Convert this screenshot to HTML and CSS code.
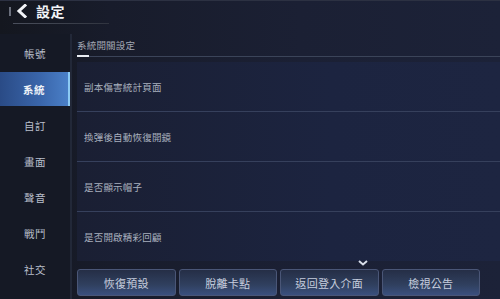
FILE: index.html
```html
<!DOCTYPE html>
<html lang="zh-Hant">
<head>
<meta charset="utf-8">
<link rel="stylesheet" href="styles.css">
</head>
<body>
<div class="app">
  <header class="topbar">
    <div class="brand">
      <span class="tick"></span>
      <svg class="back" width="12" height="14" viewBox="0 0 12 14"><path d="M9 1.5 L3 7 L9 12.5" fill="none" stroke="#f2f4f8" stroke-width="3" stroke-linecap="square"/></svg>
      <span class="title">設定</span>
    </div>
    <div class="underline"></div>
  </header>
  <div class="main">
    <nav class="sidebar">
      <div class="nav-item">帳號</div>
      <div class="nav-item active">系統</div>
      <div class="nav-item">自訂</div>
      <div class="nav-item">畫面</div>
      <div class="nav-item">聲音</div>
      <div class="nav-item">戰鬥</div>
      <div class="nav-item">社交</div>
      <div class="nav-item">其他</div>
    </nav>
    <section class="content">
      <div class="tabbar"><span class="tab">系統開關設定</span></div>
      <div class="rows">
        <div class="row">副本傷害統計頁面</div>
        <div class="row">換彈後自動恢復開鏡</div>
        <div class="row">是否顯示帽子</div>
        <div class="row">是否開啟精彩回顧</div>
      </div>
      <svg class="chev" width="10" height="6" viewBox="0 0 10 6"><path d="M1 1 L5 4.5 L9 1" fill="none" stroke="#d8deea" stroke-width="2"/></svg>
      <div class="buttons">
        <div class="btn">恢復預設</div>
        <div class="btn">脫離卡點</div>
        <div class="btn">返回登入介面</div>
        <div class="btn">檢視公告</div>
      </div>
    </section>
  </div>
</div>
</body>
</html>
```
FILE: styles.css
```css
* { box-sizing: border-box; margin: 0; padding: 0; }
html, body { width: 500px; height: 299px; overflow: hidden; }
body {
  background: #171b2a;
  font-family: "Noto Sans CJK TC", "Noto Sans", sans-serif;
}
.app {
  width: 500px;
  height: 299px;
  display: flex;
  flex-direction: column;
  background: linear-gradient(90deg, #14171f 0px, #181c2b 110px, #1b2034 300px, #1c2238 500px);
  border-top: 1px solid #2c3142;
  overflow: hidden;
}
.topbar {
  height: 33px;
  flex: none;
  padding: 2px 0 0 9px;
}
.brand {
  display: flex;
  align-items: center;
  height: 16px;
}
.tick {
  width: 2px;
  height: 9px;
  background: #6a6f7c;
  margin-right: 5px;
}
.back { margin-right: 8px; }
.title {
  color: #f2f4f8;
  font-size: 14px;
  font-weight: 700;
  letter-spacing: 0.5px;
  line-height: 16px;
}
.underline {
  margin: 4px 0 0 4px;
  width: 96px;
  height: 1px;
  background: linear-gradient(90deg, #4a4f5c, #30343f);
}
.main {
  flex: 1;
  display: flex;
  min-height: 0;
}
.sidebar {
  width: 72px;
  flex: none;
  background: #151925;
  border-right: 2px solid #222838;
  padding-top: 1px;
  display: flex;
  flex-direction: column;
}
.nav-item {
  height: 34px;
  margin: 1px 0;
  flex: none;
  display: flex;
  align-items: center;
  justify-content: center;
  color: #b9bfcb;
  font-size: 10.5px;
  letter-spacing: 0.5px;
}
.nav-item.active {
  color: #eef2f8;
  font-weight: 700;
  background: linear-gradient(90deg, #2a4b86, #3a66ab 60%, #4a7fc7);
  border-right: 2px solid #8ccaf3;
}
.content {
  flex: 1;
  position: relative;
  padding-left: 5px;
  display: flex;
  flex-direction: column;
}
.tabbar {
  height: 23px;
  flex: none;
  border-bottom: 1px solid #3b4459;
  display: flex;
  align-items: flex-end;
}
.tab {
  position: relative;
  color: #a3a8b4;
  font-size: 9.5px;
  line-height: 12px;
  padding-bottom: 5px;
  letter-spacing: 0.2px;
}
.tab::after {
  content: "";
  position: absolute;
  left: 0;
  bottom: -1px;
  width: 12px;
  height: 2px;
  background: #e8ecf2;
}
.rows {
  margin-top: 5px;
  display: flex;
  flex-direction: column;
}
.row {
  height: 50px;
  display: flex;
  align-items: center;
  padding-left: 7px;
  color: #a9b0be;
  font-size: 9.5px;
  letter-spacing: 0.2px;
  background: linear-gradient(90deg, #1a1f33, #1c2440 60%, #1d2541);
  border-bottom: 1px solid #36405c;
}
.row:last-child { border-bottom: none; height: 49px; }
.chev {
  position: absolute;
  left: 286px;
  top: 226px;
}
.buttons {
  margin-top: 8px;
  display: flex;
  gap: 3px;
}
.btn {
  width: 98.5px;
  height: 27px;
  display: flex;
  align-items: center;
  justify-content: center;
  color: #c6cddd;
  font-size: 11px;
  letter-spacing: 0.3px;
  border: 1px solid #4a5677;
  border-radius: 3px;
  background: linear-gradient(180deg, #252e46, #30405f 60%, #3a4f7e);
}
```
